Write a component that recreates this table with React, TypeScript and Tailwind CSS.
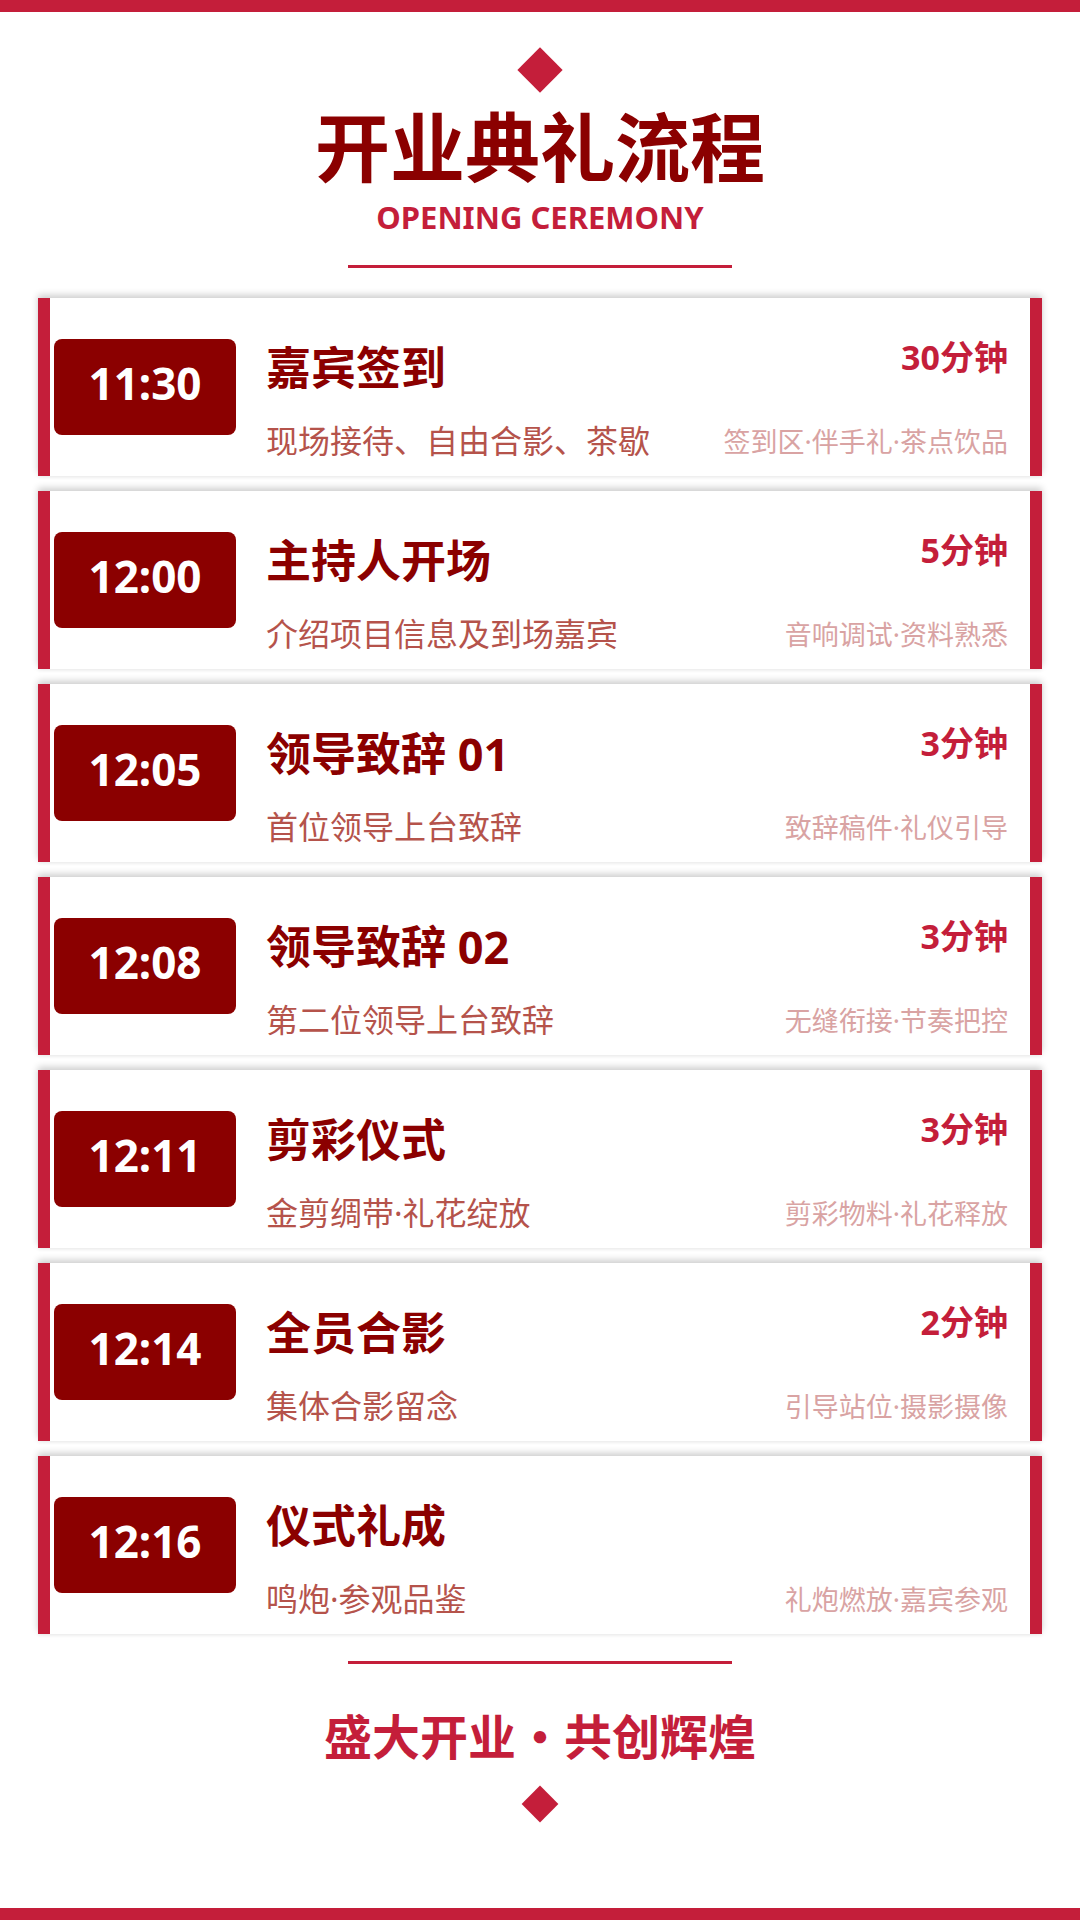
import { type ReactNode } from 'react';

type Step = {
  time: string;
  title: string;
  desc: string;
  duration?: string;
  note: string;
};

const steps: Step[] = [
  { time: '11:30', title: '嘉宾签到', desc: '现场接待、自由合影、茶歇', duration: '30分钟', note: '签到区·伴手礼·茶点饮品' },
  { time: '12:00', title: '主持人开场', desc: '介绍项目信息及到场嘉宾', duration: '5分钟', note: '音响调试·资料熟悉' },
  { time: '12:05', title: '领导致辞 01', desc: '首位领导上台致辞', duration: '3分钟', note: '致辞稿件·礼仪引导' },
  { time: '12:08', title: '领导致辞 02', desc: '第二位领导上台致辞', duration: '3分钟', note: '无缝衔接·节奏把控' },
  { time: '12:11', title: '剪彩仪式', desc: '金剪绸带·礼花绽放', duration: '3分钟', note: '剪彩物料·礼花释放' },
  { time: '12:14', title: '全员合影', desc: '集体合影留念', duration: '2分钟', note: '引导站位·摄影摄像' },
  { time: '12:16', title: '仪式礼成', desc: '鸣炮·参观品鉴', note: '礼炮燃放·嘉宾参观' },
];

function Diamond({ size }: { size: string }) {
  return <div className={`${size} rotate-45 bg-[#c41e3a]`} />;
}

function Divider() {
  return <div className="h-[3px] w-[384px] bg-[#c41e3a]" />;
}

function StepCard({ step }: { step: Step }) {
  return (
    <div className="flex h-[178px] items-center border-x-[12px] border-[#c41e3a] bg-white pl-[4px] shadow-[0_-3px_7px_rgba(0,0,0,0.2),0_2px_3px_rgba(0,0,0,0.04)]">
      <div className="flex h-[96px] w-[182px] shrink-0 items-center justify-center rounded-lg bg-[#8b0000] pb-[9px]">
        <span className="text-[44px] font-bold leading-none text-white">{step.time}</span>
      </div>
      <div className="ml-[30px] flex-1 self-stretch pr-[22px] pt-[47px]">
        <div className="flex items-start justify-between">
          <h3 className="text-[45px] font-bold leading-none text-[#8b0000]">{step.title}</h3>
          {step.duration && (
            <span className="-mt-[5px] text-[34px] font-bold leading-none text-[#c41e3a]">{step.duration}</span>
          )}
        </div>
        <div className="mt-[35px] flex items-center justify-between">
          <p className="text-[32px] leading-none text-[#b5534b]">{step.desc}</p>
          <p className="text-[27px] leading-none text-[#d9a3a3]">{step.note}</p>
        </div>
      </div>
    </div>
  );
}

function Page({ children }: { children: ReactNode }) {
  return (
    <div className="flex min-h-[1920px] w-[1080px] flex-col items-center bg-white font-['Noto_Sans','Noto_Sans_CJK_SC',sans-serif]">
      {children}
    </div>
  );
}

export default function App() {
  return (
    <Page>
      <div className="h-[12px] w-full bg-[#c41e3a]" />

      {/* header */}
      <div className="mt-[42px]">
        <Diamond size="h-[32px] w-[32px]" />
      </div>
      <h1 className="mt-[24px] text-[75px] font-bold leading-none text-[#8b0000]">开业典礼流程</h1>
      <p className="mt-[17px] text-[31px] font-bold leading-none text-[#c41e3a]">OPENING CEREMONY</p>
      <div className="mt-[32px]">
        <Divider />
      </div>

      {/* steps */}
      <div className="mt-[30px] flex w-full flex-col gap-[15px] px-[38px]">
        {steps.map((step) => (
          <StepCard key={step.time} step={step} />
        ))}
      </div>

      {/* footer */}
      <div className="mt-[27px]">
        <Divider />
      </div>
      <p className="mt-[49px] text-[48px] font-bold leading-none text-[#c41e3a]">盛大开业・共创辉煌</p>
      <div className="mt-[30px]">
        <Diamond size="h-[26px] w-[26px]" />
      </div>

      <div className="mt-auto h-[12px] w-full bg-[#c41e3a]" />
    </Page>
  );
}
